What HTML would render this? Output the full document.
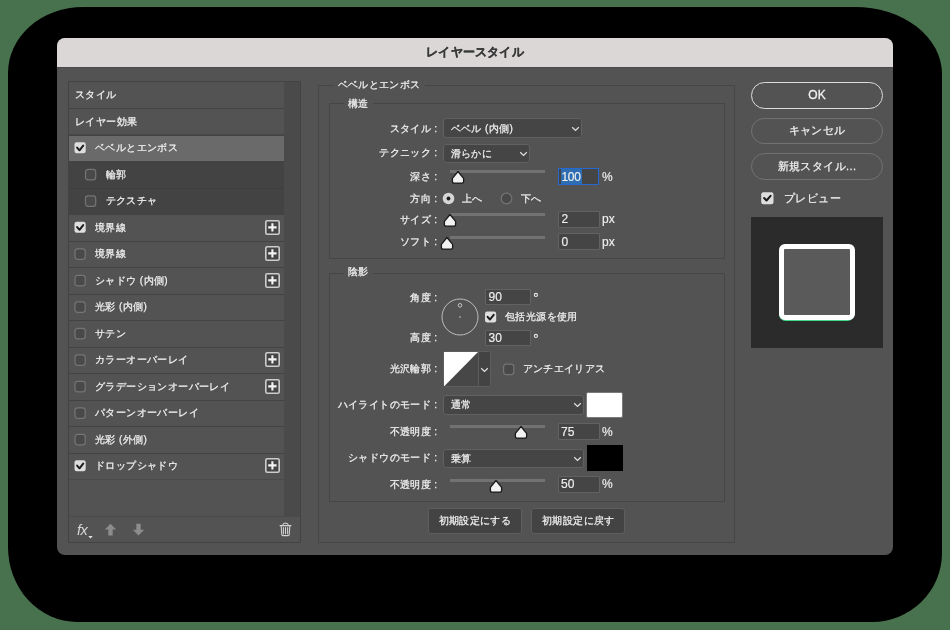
<!DOCTYPE html>
<html lang="ja">
<head>
<meta charset="utf-8">
<style>
*{box-sizing:border-box;margin:0;padding:0}
html,body{width:950px;height:630px;overflow:hidden;background:#48724e;font-family:"Liberation Sans",sans-serif;color:#f0f0f0}
.a{position:absolute}
#shadow{left:8px;top:7px;width:934px;height:615px;background:#000;border-radius:75px 87px 70px 69px / 66px 67px 69px 75px}
#dlg{left:57px;top:38px;width:836px;height:517px;background:#535353;border-radius:8px;overflow:hidden}
#title{left:0;top:0;width:836px;height:29px;background:#dbd7d7;color:#3a3a3a;font-weight:bold;font-size:12px;text-align:center;line-height:28px;letter-spacing:0.2px;-webkit-text-stroke:0.3px #3a3a3a}
.t{position:absolute;white-space:nowrap;font-size:10px;letter-spacing:0.4px;line-height:14px;-webkit-text-stroke:0.25px #f0f0f0}
.lab{position:absolute;white-space:nowrap;font-size:10px;letter-spacing:0.4px;line-height:14px;text-align:right;-webkit-text-stroke:0.25px #f0f0f0}
.n{position:absolute;white-space:nowrap;font-size:12px;line-height:14px;color:#f0f0f0;-webkit-text-stroke:0.15px #f0f0f0}
#lpf{left:68px;top:81px;width:233px;height:462px;border:1px solid #434343;background:#535353}
.row{position:absolute;left:69px;width:215px;background:#535353}
.row.sel{background:#6a6a6a}
.row.sub{background:#434343}
.sepl{position:absolute;left:69px;width:215px;height:1px;background:#434343}
#track{left:284px;top:82px;width:16px;height:434px;background:#4a4a4a}
#foot{left:69px;top:516px;width:231px;height:1px;background:#4a4a4a}
.cb{position:absolute;width:11px;height:11px;border-radius:2px}
.cb svg{display:block}
.cb.on{background:#dedede}
.cb.off{border:1px solid #767676;background:#4a4a4a}
.plus{position:absolute;width:15px;height:15px;border:1.6px solid #cdcdcd;border-radius:1.5px;background:#454545}
.plus:before{content:"";position:absolute;left:4.6px;top:1.7px;width:2.2px;height:8.4px;background:#f4f4f4}
.plus:after{content:"";position:absolute;left:1.7px;top:4.6px;width:8.4px;height:2.2px;background:#f4f4f4}
.gb{position:absolute;border:1px solid #464646}
.gt{position:absolute;background:#535353;padding:0 4px;white-space:nowrap;font-size:10px;letter-spacing:0.4px;line-height:14px;-webkit-text-stroke:0.25px #f0f0f0}
.dd{position:absolute;background:#454545;border:1px solid #616161;border-radius:3px}
.dd svg{position:absolute}
.inp{position:absolute;background:#454545;border:1px solid #626262;border-radius:1px}
.track{position:absolute;height:3px;background:#727272}
.thumb{position:absolute;width:14px;height:15px}
.thumb svg{display:block}
.pbtn{position:absolute;border:1.2px solid #727272;border-radius:14px;text-align:center}
.rt{font-size:11px;letter-spacing:0.4px}
.sbtn{position:absolute;background:#434343;border:1px solid #5e5e5e;border-radius:3px}
</style>
</head>
<body>
<div id="root" style="position:absolute;left:0;top:0;width:950px;height:630px;will-change:transform">
<div id="shadow" class="a"></div>
<div id="dlg" class="a"><div id="title" class="a">レイヤースタイル</div><div class="a" style="left:0;top:29px;width:836px;height:1px;background:#4a4a4a"></div></div>
<div id="lpf" class="a"></div>
<div id="track" class="a"></div>
<div class="row" style="top:82px;height:26px"></div>
<div class="sepl" style="top:108px;background:#434343"></div>
<div class="t" style="left:75px;top:87.80px">スタイル</div>
<div class="row" style="top:109px;height:26px"></div>
<div class="sepl" style="top:135px;background:#434343"></div>
<div class="sepl" style="top:134px;background:#484848"></div>
<div class="t" style="left:75px;top:114.80px">レイヤー効果</div>
<div class="row sel" style="top:136px;height:25px"></div>
<div class="sepl" style="top:161px;background:#434343"></div>
<svg class='a' style='left:74px;top:142px' width=14 height=14 viewBox='0 0 14 14'><rect x=0.50 y=0.30 width=11.2 height=11.0 rx=2.2 fill=#dedede /><path d='M3.10 5.60 L5.50 8.30 L9.20 3.60' fill=none stroke=#1c1c1c stroke-width=2 stroke-linecap=round stroke-linejoin=round /></svg>
<div class="t" style="left:95px;top:141.30px">ベベルとエンボス</div>
<div class="row sub" style="top:162px;height:26px"></div>
<div class="sepl" style="top:188px;background:#3e3e3e"></div>
<svg class='a' style='left:84px;top:168px' width=14 height=14 viewBox='0 0 14 14'><rect x=1.50 y=1.40 width=10.20 height=10.40 rx=2.6 fill=#494949 stroke=#757575 stroke-width=1.2 /></svg>
<div class="t" style="left:105.5px;top:167.80px">輪郭</div>
<div class="row sub" style="top:189px;height:25px"></div>
<div class="sepl" style="top:214px;background:#434343"></div>
<svg class='a' style='left:84px;top:195px' width=14 height=14 viewBox='0 0 14 14'><rect x=1.50 y=0.90 width=10.20 height=10.40 rx=2.6 fill=#494949 stroke=#757575 stroke-width=1.2 /></svg>
<div class="t" style="left:105.5px;top:194.30px">テクスチャ</div>
<div class="row" style="top:215px;height:26px"></div>
<div class="sepl" style="top:241px;background:#434343"></div>
<svg class='a' style='left:74px;top:221px' width=14 height=14 viewBox='0 0 14 14'><rect x=0.50 y=0.80 width=11.2 height=11.0 rx=2.2 fill=#dedede /><path d='M3.10 6.10 L5.50 8.80 L9.20 4.10' fill=none stroke=#1c1c1c stroke-width=2 stroke-linecap=round stroke-linejoin=round /></svg>
<div class="t" style="left:95px;top:220.80px">境界線</div>
<svg class='a' style='left:265px;top:220px' width=15 height=15 viewBox='0 0 15 15'><rect x=0.8 y=0.8 width=13.4 height=13.4 rx=1.5 fill=#454545 stroke=#cdcdcd stroke-width=1.6 /><path d='M7.4 3.2 V11.6 M3.2 7.4 H11.6' stroke=#f4f4f4 stroke-width=2.1 /></svg>
<div class="row" style="top:242px;height:25px"></div>
<div class="sepl" style="top:267px;background:#434343"></div>
<svg class='a' style='left:74px;top:248px' width=14 height=14 viewBox='0 0 14 14'><rect x=1.00 y=0.90 width=10.20 height=10.40 rx=2.6 fill=#494949 stroke=#757575 stroke-width=1.2 /></svg>
<div class="t" style="left:95px;top:247.30px">境界線</div>
<svg class='a' style='left:265px;top:246px' width=15 height=15 viewBox='0 0 15 15'><rect x=0.8 y=0.8 width=13.4 height=13.4 rx=1.5 fill=#454545 stroke=#cdcdcd stroke-width=1.6 /><path d='M7.4 3.2 V11.6 M3.2 7.4 H11.6' stroke=#f4f4f4 stroke-width=2.1 /></svg>
<div class="row" style="top:268px;height:26px"></div>
<div class="sepl" style="top:294px;background:#434343"></div>
<svg class='a' style='left:74px;top:274px' width=14 height=14 viewBox='0 0 14 14'><rect x=1.00 y=1.40 width=10.20 height=10.40 rx=2.6 fill=#494949 stroke=#757575 stroke-width=1.2 /></svg>
<div class="t" style="left:95px;top:273.80px">シャドウ (内側)</div>
<svg class='a' style='left:265px;top:273px' width=15 height=15 viewBox='0 0 15 15'><rect x=0.8 y=0.8 width=13.4 height=13.4 rx=1.5 fill=#454545 stroke=#cdcdcd stroke-width=1.6 /><path d='M7.4 3.2 V11.6 M3.2 7.4 H11.6' stroke=#f4f4f4 stroke-width=2.1 /></svg>
<div class="row" style="top:295px;height:25px"></div>
<div class="sepl" style="top:320px;background:#434343"></div>
<svg class='a' style='left:74px;top:301px' width=14 height=14 viewBox='0 0 14 14'><rect x=1.00 y=0.90 width=10.20 height=10.40 rx=2.6 fill=#494949 stroke=#757575 stroke-width=1.2 /></svg>
<div class="t" style="left:95px;top:300.30px">光彩 (内側)</div>
<div class="row" style="top:321px;height:26px"></div>
<div class="sepl" style="top:347px;background:#434343"></div>
<svg class='a' style='left:74px;top:327px' width=14 height=14 viewBox='0 0 14 14'><rect x=1.00 y=1.40 width=10.20 height=10.40 rx=2.6 fill=#494949 stroke=#757575 stroke-width=1.2 /></svg>
<div class="t" style="left:95px;top:326.80px">サテン</div>
<div class="row" style="top:348px;height:25px"></div>
<div class="sepl" style="top:373px;background:#434343"></div>
<svg class='a' style='left:74px;top:354px' width=14 height=14 viewBox='0 0 14 14'><rect x=1.00 y=0.90 width=10.20 height=10.40 rx=2.6 fill=#494949 stroke=#757575 stroke-width=1.2 /></svg>
<div class="t" style="left:95px;top:353.30px">カラーオーバーレイ</div>
<svg class='a' style='left:265px;top:352px' width=15 height=15 viewBox='0 0 15 15'><rect x=0.8 y=0.8 width=13.4 height=13.4 rx=1.5 fill=#454545 stroke=#cdcdcd stroke-width=1.6 /><path d='M7.4 3.2 V11.6 M3.2 7.4 H11.6' stroke=#f4f4f4 stroke-width=2.1 /></svg>
<div class="row" style="top:374px;height:26px"></div>
<div class="sepl" style="top:400px;background:#434343"></div>
<svg class='a' style='left:74px;top:380px' width=14 height=14 viewBox='0 0 14 14'><rect x=1.00 y=1.40 width=10.20 height=10.40 rx=2.6 fill=#494949 stroke=#757575 stroke-width=1.2 /></svg>
<div class="t" style="left:95px;top:379.80px">グラデーションオーバーレイ</div>
<svg class='a' style='left:265px;top:379px' width=15 height=15 viewBox='0 0 15 15'><rect x=0.8 y=0.8 width=13.4 height=13.4 rx=1.5 fill=#454545 stroke=#cdcdcd stroke-width=1.6 /><path d='M7.4 3.2 V11.6 M3.2 7.4 H11.6' stroke=#f4f4f4 stroke-width=2.1 /></svg>
<div class="row" style="top:401px;height:25px"></div>
<div class="sepl" style="top:426px;background:#434343"></div>
<svg class='a' style='left:74px;top:407px' width=14 height=14 viewBox='0 0 14 14'><rect x=1.00 y=0.90 width=10.20 height=10.40 rx=2.6 fill=#494949 stroke=#757575 stroke-width=1.2 /></svg>
<div class="t" style="left:95px;top:406.30px">パターンオーバーレイ</div>
<div class="row" style="top:427px;height:26px"></div>
<div class="sepl" style="top:453px;background:#434343"></div>
<svg class='a' style='left:74px;top:433px' width=14 height=14 viewBox='0 0 14 14'><rect x=1.00 y=1.40 width=10.20 height=10.40 rx=2.6 fill=#494949 stroke=#757575 stroke-width=1.2 /></svg>
<div class="t" style="left:95px;top:432.80px">光彩 (外側)</div>
<div class="row" style="top:454px;height:25px"></div>
<div class="sepl" style="top:479px;background:#4b4b4b"></div>
<svg class='a' style='left:74px;top:460px' width=14 height=14 viewBox='0 0 14 14'><rect x=0.50 y=0.30 width=11.2 height=11.0 rx=2.2 fill=#dedede /><path d='M3.10 5.60 L5.50 8.30 L9.20 3.60' fill=none stroke=#1c1c1c stroke-width=2 stroke-linecap=round stroke-linejoin=round /></svg>
<div class="t" style="left:95px;top:459.30px">ドロップシャドウ</div>
<svg class='a' style='left:265px;top:458px' width=15 height=15 viewBox='0 0 15 15'><rect x=0.8 y=0.8 width=13.4 height=13.4 rx=1.5 fill=#454545 stroke=#cdcdcd stroke-width=1.6 /><path d='M7.4 3.2 V11.6 M3.2 7.4 H11.6' stroke=#f4f4f4 stroke-width=2.1 /></svg>
<div id="foot" class="a"></div>
<div class="a" style="left:77px;top:522px;font-style:italic;font-size:14.5px;line-height:16px;color:#d6d6d6;letter-spacing:-0.6px">fx</div>
<svg class="a" style="left:88px;top:535.5px" width=5 height=3 viewBox='0 0 5 3'><path d='M0.3 0 L4.7 0 L2.5 2.6z' fill=#e6e6e6 /></svg>
<svg class="a" style="left:104px;top:522.5px" width=13 height=13 viewBox='0 0 13 13'><path d='M6.5 0.8 L12.2 6.6 L8.7 6.6 L8.7 12.5 L4.3 12.5 L4.3 6.6 L0.8 6.6z' fill=#8c8c8c /></svg>
<svg class="a" style="left:132px;top:522.5px" width=13 height=13 viewBox='0 0 13 13'><path d='M6.5 12.5 L12.2 6.7 L8.7 6.7 L8.7 0.8 L4.3 0.8 L4.3 6.7 L0.8 6.7z' fill=#8c8c8c /></svg>
<svg class="a" style="left:279px;top:522px" width=13 height=15 viewBox='0 0 13 15'><path d='M1 3.6 H12 M3.6 3.4 Q4 1.2 6.5 1.1 Q9 1.2 9.4 3.4 M2.2 4.4 L2.8 12.6 Q2.9 13.6 3.9 13.6 H9.1 Q10.1 13.6 10.2 12.6 L10.8 4.4 M4.4 5.6 V11.8 M6.5 5.6 V11.8 M8.6 5.6 V11.8' fill=none stroke=#d2d2d2 stroke-width=1.05 stroke-linecap=round /></svg>
<div class="gb" style="left:318px;top:85px;width:417px;height:458px"></div>
<div class="gt" style="left:333.5px;top:77.5px">ベベルとエンボス</div>
<div class="gb" style="left:329px;top:103px;width:396px;height:156px"></div>
<div class="gt" style="left:344px;top:96.5px">構造</div>
<div class="gb" style="left:329px;top:272.5px;width:396px;height:229.5px"></div>
<div class="gt" style="left:344px;top:265px">陰影</div>
<div class="lab" style="right:512.5px;top:121.5px">スタイル :</div>
<div class="lab" style="right:512.5px;top:146.0px">テクニック :</div>
<div class="lab" style="right:512.5px;top:170.0px">深さ :</div>
<div class="lab" style="right:512.5px;top:192.0px">方向 :</div>
<div class="lab" style="right:512.5px;top:213.0px">サイズ :</div>
<div class="lab" style="right:512.5px;top:235.0px">ソフト :</div>
<div class="lab" style="right:512.5px;top:290.5px">角度 :</div>
<div class="lab" style="right:512.5px;top:331.0px">高度 :</div>
<div class="lab" style="right:512.5px;top:362.0px">光沢輪郭 :</div>
<div class="lab" style="right:512.5px;top:397.5px">ハイライトのモード :</div>
<div class="lab" style="right:512.5px;top:425.0px">不透明度 :</div>
<div class="lab" style="right:512.5px;top:450.5px">シャドウのモード :</div>
<div class="lab" style="right:512.5px;top:477.5px">不透明度 :</div>
<div class="dd" style="left:443px;top:118px;width:138.5px;height:20px"></div>
<div class="t" style="left:450.5px;top:121.5px">ベベル (内側)</div>
<svg class='a' style='left:570.5px;top:125.7px' width=9 height=6 viewBox='0 0 9 6'><path d='M1.2 1.3 L4.5 4.5 L7.8 1.3' fill=none stroke=#e0e0e0 stroke-width=1.25 /></svg>
<div class="dd" style="left:443px;top:143.5px;width:86.5px;height:19.0px"></div>
<div class="t" style="left:450.5px;top:146.5px">滑らかに</div>
<svg class='a' style='left:518.5px;top:150.7px' width=9 height=6 viewBox='0 0 9 6'><path d='M1.2 1.3 L4.5 4.5 L7.8 1.3' fill=none stroke=#e0e0e0 stroke-width=1.25 /></svg>
<div class="dd" style="left:443px;top:395px;width:140.5px;height:19.5px"></div>
<div class="t" style="left:450.5px;top:398.2px">通常</div>
<svg class='a' style='left:572.5px;top:402.45px' width=9 height=6 viewBox='0 0 9 6'><path d='M1.2 1.3 L4.5 4.5 L7.8 1.3' fill=none stroke=#e0e0e0 stroke-width=1.25 /></svg>
<div class="dd" style="left:443px;top:448.5px;width:140.5px;height:19.0px"></div>
<div class="t" style="left:450.5px;top:451.5px">乗算</div>
<svg class='a' style='left:572.5px;top:455.7px' width=9 height=6 viewBox='0 0 9 6'><path d='M1.2 1.3 L4.5 4.5 L7.8 1.3' fill=none stroke=#e0e0e0 stroke-width=1.25 /></svg>
<div class="track" style="left:450px;top:170px;width:95px"></div>
<div class="thumb" style="left:450.80px;top:170px"><svg width=14 height=15 viewBox='0 0 14 15'><path d='M7 1.5 L12.6 8.3 V11.5 Q12.6 13.1 11 13.1 H3 Q1.4 13.1 1.4 11.5 V8.3 Z' fill=#f2f2f2 stroke=#1a1a1a stroke-width=1.3 stroke-linejoin=round /></svg></div>
<div class="track" style="left:450px;top:213px;width:95px"></div>
<div class="thumb" style="left:442.50px;top:213px"><svg width=14 height=15 viewBox='0 0 14 15'><path d='M7 1.5 L12.6 8.3 V11.5 Q12.6 13.1 11 13.1 H3 Q1.4 13.1 1.4 11.5 V8.3 Z' fill=#f2f2f2 stroke=#1a1a1a stroke-width=1.3 stroke-linejoin=round /></svg></div>
<div class="track" style="left:450px;top:236px;width:95px"></div>
<div class="thumb" style="left:440.20px;top:236px"><svg width=14 height=15 viewBox='0 0 14 15'><path d='M7 1.5 L12.6 8.3 V11.5 Q12.6 13.1 11 13.1 H3 Q1.4 13.1 1.4 11.5 V8.3 Z' fill=#f2f2f2 stroke=#1a1a1a stroke-width=1.3 stroke-linejoin=round /></svg></div>
<div class="track" style="left:450px;top:425px;width:95px"></div>
<div class="thumb" style="left:513.60px;top:425px"><svg width=14 height=15 viewBox='0 0 14 15'><path d='M7 1.5 L12.6 8.3 V11.5 Q12.6 13.1 11 13.1 H3 Q1.4 13.1 1.4 11.5 V8.3 Z' fill=#f2f2f2 stroke=#1a1a1a stroke-width=1.3 stroke-linejoin=round /></svg></div>
<div class="track" style="left:450px;top:478.5px;width:95px"></div>
<div class="thumb" style="left:489.10px;top:478.5px"><svg width=14 height=15 viewBox='0 0 14 15'><path d='M7 1.5 L12.6 8.3 V11.5 Q12.6 13.1 11 13.1 H3 Q1.4 13.1 1.4 11.5 V8.3 Z' fill=#f2f2f2 stroke=#1a1a1a stroke-width=1.3 stroke-linejoin=round /></svg></div>
<div class="a" style="left:557.5px;top:167.5px;width:41.5px;height:17.5px;border:1.6px solid #2568d0;background:#454545"></div>
<div class="a" style="left:561px;top:169.2px;width:21px;height:14.5px;background:#2f6db3"></div>
<div class="n" style="left:561.5px;top:170px;letter-spacing:-0.3px">100</div>
<div class="n" style="left:602px;top:169.5px">%</div>
<div class="inp" style="left:558px;top:210.5px;width:41.5px;height:17.0px"></div>
<div class="n" style="left:561.5px;top:212.0px">2</div>
<div class="n" style="left:602.0px;top:212.0px">px</div>
<div class="inp" style="left:558px;top:233px;width:41.5px;height:17px"></div>
<div class="n" style="left:561.5px;top:234.5px">0</div>
<div class="n" style="left:602.0px;top:234.5px">px</div>
<div class="inp" style="left:485px;top:288.5px;width:45.5px;height:16.5px"></div>
<div class="n" style="left:488.5px;top:289.8px">90</div>
<svg class='a' style='left:532px;top:291px' width=8 height=8 viewBox='0 0 8 8'><circle cx=3.9 cy=3.9 r=1.55 fill=none stroke=#e8e8e8 stroke-width=1.1 /></svg>
<div class="inp" style="left:485px;top:329.5px;width:45.5px;height:16.5px"></div>
<div class="n" style="left:488.5px;top:330.8px">30</div>
<svg class='a' style='left:532px;top:332px' width=8 height=8 viewBox='0 0 8 8'><circle cx=3.9 cy=3.9 r=1.55 fill=none stroke=#e8e8e8 stroke-width=1.1 /></svg>
<div class="inp" style="left:557.5px;top:423px;width:42.0px;height:17px"></div>
<div class="n" style="left:561.0px;top:424.5px">75</div>
<div class="n" style="left:602.0px;top:424.5px">%</div>
<div class="inp" style="left:557.5px;top:476px;width:42.0px;height:16.5px"></div>
<div class="n" style="left:561.0px;top:477.2px">50</div>
<div class="n" style="left:602.0px;top:477.2px">%</div>
<svg class="a" style="left:441.8px;top:192.2px" width=13 height=13 viewBox='0 0 13 13'><circle cx=6.5 cy=6.5 r=5.8 fill=#d6d6d6 /><circle cx=6.5 cy=6.5 r=1.9 fill=#1e1e1e /></svg>
<div class="t" style="left:462px;top:192px">上へ</div>
<svg class="a" style="left:499.8px;top:192.2px" width=13 height=13 viewBox='0 0 13 13'><circle cx=6.5 cy=6.5 r=5.3 fill=#494949 stroke=#747474 stroke-width=1.2 /></svg>
<div class="t" style="left:520.5px;top:192px">下へ</div>
<svg class="a" style="left:440px;top:297px" width=40 height=40 viewBox='0 0 40 40'><circle cx=20 cy=20 r=18 fill=none stroke=#bdbdbd stroke-width=1 /><circle cx=20 cy=8.3 r=1.8 fill=none stroke=#cfcfcf stroke-width=0.9 /><circle cx=20 cy=20 r=0.8 fill=#cfcfcf /></svg>
<svg class='a' style='left:485px;top:311px' width=14 height=14 viewBox='0 0 14 14'><rect x=0.00 y=0.50 width=11.2 height=11.0 rx=2.2 fill=#dedede /><path d='M2.60 5.80 L5.00 8.50 L8.70 3.80' fill=none stroke=#1c1c1c stroke-width=2 stroke-linecap=round stroke-linejoin=round /></svg>
<div class="t" style="left:505px;top:310px">包括光源を使用</div>
<div class="sbtn" style="left:443px;top:350.5px;width:47.5px;height:36.5px;background:#474747"></div>
<svg class="a" style="left:444px;top:351.5px" width=34 height=34.5 viewBox='0 0 34 34.5'><path d='M0 0 H34 L0 34.5 Z' fill=#ffffff /></svg>
<div class="a" style="left:477.5px;top:351px;width:2px;height:35.5px;background:#5c5c5c"></div>
<div class="a" style="left:479px;top:351.5px;width:10.5px;height:34.5px;background:#434343;border-radius:0 2px 2px 0"></div>
<svg class='a' style='left:479.8px;top:367px' width=9 height=6 viewBox='0 0 9 6'><path d='M1.2 1.3 L4.5 4.5 L7.8 1.3' fill=none stroke=#e0e0e0 stroke-width=1.25 /></svg>
<svg class='a' style='left:503px;top:363px' width=14 height=14 viewBox='0 0 14 14'><rect x=0.60 y=1.20 width=10.20 height=10.40 rx=2.6 fill=#494949 stroke=#757575 stroke-width=1.2 /></svg>
<div class="t" style="left:522.5px;top:362px">アンチエイリアス</div>
<div class="a" style="left:586px;top:391.5px;width:36.5px;height:26.5px;background:#fff;border:1px solid #7a7a7a;border-radius:2px"></div>
<div class="a" style="left:587px;top:445px;width:35.5px;height:25.5px;background:#000"></div>
<div class="sbtn" style="left:428px;top:508px;width:94px;height:26px"></div>
<div class="t" style="left:438.5px;top:513.5px">初期設定にする</div>
<div class="sbtn" style="left:531px;top:508px;width:94px;height:26px"></div>
<div class="t" style="left:542px;top:513.5px">初期設定に戻す</div>
<div class="pbtn" style="left:751px;top:82px;width:132px;height:26.5px;border:1.5px solid #dcdcdc"></div>
<div class="n" style="left:751px;top:88px;width:132px;text-align:center;font-size:12px;-webkit-text-stroke:0.3px #f0f0f0">OK</div>
<div class="pbtn" style="left:751px;top:117.5px;width:132px;height:26.5px"></div>
<div class="t rt" style="left:751px;top:122.5px;width:132px;text-align:center">キャンセル</div>
<div class="pbtn" style="left:751px;top:153px;width:132px;height:26.5px"></div>
<div class="t rt" style="left:751px;top:159px;width:132px;text-align:center">新規スタイル...</div>
<svg class='a' style='left:761px;top:192px' width=13 height=13 viewBox='0 0 13 13'><rect x=0.2 y=0.2 width=12.3 height=12 rx=2.2 fill=#dedede /><path d='M3.1 6.1 L5.5 8.5 L9.6 3.9' fill=none stroke=#1c1c1c stroke-width=2.1 stroke-linecap=round stroke-linejoin=round /></svg>
<div class="t rt" style="left:784px;top:191px">プレビュー</div>
<div class="a" style="left:751px;top:216.5px;width:131.5px;height:131px;background:#2b2b2b"></div>
<div class="a" style="left:779.3px;top:245.6px;width:75px;height:75.6px;border-radius:6.5px;background:#3fd98a"></div>
<div class="a" style="left:778.8px;top:244.2px;width:76px;height:75.6px;border:5.8px solid #fff;border-radius:6px;background:#5a5a5a"></div>
</div>
</body>
</html>
